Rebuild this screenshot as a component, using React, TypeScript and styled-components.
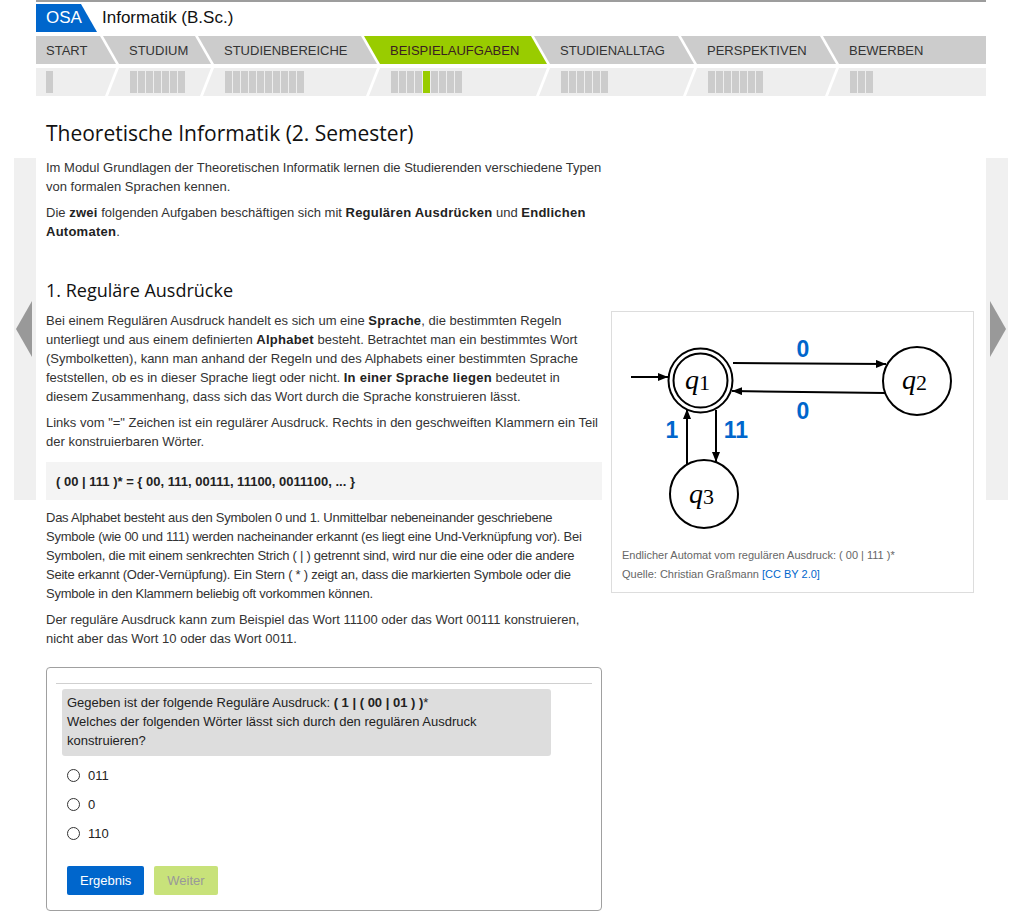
import React from "react";
import styled, { createGlobalStyle } from "styled-components";

const GlobalStyle = createGlobalStyle`
  html, body {
    margin: 0;
    padding: 0;
    background: #fff;
  }
  body {
    font-family: "Liberation Sans", Arial, sans-serif;
    font-size: 13px;
    color: #333;
  }
`;

type StepData = {
  label: string;
  width: number;
  blocks: number;
  active?: boolean;
  current?: number;
};

const steps: StepData[] = [
  { label: "START", width: 80, blocks: 1 },
  { label: "STUDIUM", width: 108, blocks: 7 },
  { label: "STUDIENBEREICHE", width: 179, blocks: 10 },
  { label: "BEISPIELAUFGABEN", width: 183, blocks: 9, active: true, current: 4 },
  { label: "STUDIENALLTAG", width: 160, blocks: 6 },
  { label: "PERSPEKTIVEN", width: 155, blocks: 7 },
  { label: "BEWERBEN", width: 163, blocks: 3 },
];

type Pos = "first" | "mid" | "last";

const tabClip: Record<Pos, string> = {
  first: "polygon(0 0, calc(100% - 16px) 0, 100% 100%, 0 100%)",
  mid: "polygon(0 0, calc(100% - 16px) 0, 100% 100%, 16px 100%)",
  last: "polygon(0 0, 100% 0, 100% 100%, 16px 100%)",
};

const progressClip: Record<Pos, string> = {
  first: "polygon(0 0, 100% 0, calc(100% - 11px) 100%, 0 100%)",
  mid: "polygon(16px 0, 100% 0, calc(100% - 11px) 100%, 5px 100%)",
  last: "polygon(16px 0, 100% 0, 100% 100%, 5px 100%)",
};

export default function App() {
  return (
    <>
      <GlobalStyle />
      <Page>
        <Header>
          <TopRule />
          <Brand>
            <Logo>OSA</Logo>
            <BrandTitle>Informatik (B.Sc.)</BrandTitle>
          </Brand>
          <Nav>
            {steps.map((s, i) => {
              const pos: Pos = i === 0 ? "first" : i === steps.length - 1 ? "last" : "mid";
              return (
                <Step key={s.label} $w={s.width} $pos={pos}>
                  <Tab $pos={pos} $active={s.active}>
                    {s.label}
                  </Tab>
                  <Progress $pos={pos}>
                    {Array.from({ length: s.blocks }).map((_, b) => (
                      <Block key={b} $on={s.current === b} />
                    ))}
                  </Progress>
                </Step>
              );
            })}
          </Nav>
        </Header>

        <SideButton $side="left" aria-label="zurück">
          <Arrow $dir="left" />
        </SideButton>

        <Content>
          <PageTitle>Theoretische Informatik (2. Semester)</PageTitle>
          <Intro>
            <P>
              Im Modul Grundlagen der Theoretischen Informatik lernen die Studierenden verschiedene
              Typen von formalen Sprachen kennen.
            </P>
            <P>
              Die <b>zwei</b> folgenden Aufgaben beschäftigen sich mit <b>Regulären Ausdrücken</b> und{" "}
              <b>Endlichen Automaten</b>.
            </P>
          </Intro>

          <SectionTitle>1. Reguläre Ausdrücke</SectionTitle>

          <Row>
            <TextColumn>
              <P>
                Bei einem Regulären Ausdruck handelt es sich um eine <b>Sprache</b>, die bestimmten
                Regeln unterliegt und aus einem definierten <b>Alphabet</b> besteht. Betrachtet man
                ein bestimmtes Wort (Symbolketten), kann man anhand der Regeln und des Alphabets einer
                bestimmten Sprache feststellen, ob es in dieser Sprache liegt oder nicht.{" "}
                <b>In einer Sprache liegen</b> bedeutet in diesem Zusammenhang, dass sich das Wort
                durch die Sprache konstruieren lässt.
              </P>
              <P>
                Links vom "=" Zeichen ist ein regulärer Ausdruck. Rechts in den geschweiften Klammern
                ein Teil der konstruierbaren Wörter.
              </P>
              <CodeBlock>( 00 | 111 )* = {"{"} 00, 111, 00111, 11100, 0011100, ... {"}"}</CodeBlock>
              <P $tight>
                Das Alphabet besteht aus den Symbolen 0 und 1. Unmittelbar nebeneinander geschriebene
                Symbole (wie 00 und 111) werden nacheinander erkannt (es liegt eine Und-Verknüpfung
                vor). Bei Symbolen, die mit einem senkrechten Strich ( | ) getrennt sind, wird nur die
                eine oder die andere Seite erkannt (Oder-Vernüpfung). Ein Stern ( * ) zeigt an, dass
                die markierten Symbole oder die Symbole in den Klammern beliebig oft vorkommen können.
              </P>
              <P>
                Der reguläre Ausdruck kann zum Beispiel das Wort 11100 oder das Wort 00111
                konstruieren, nicht aber das Wort 10 oder das Wort 0011.
              </P>

              <Quiz>
                <QuizRule />
                <Question>
                  Gegeben ist der folgende Reguläre Ausdruck: <b>( 1 | ( 00 | 01 ) )</b>*
                  <br />
                  Welches der folgenden Wörter lässt sich durch den regulären Ausdruck konstruieren?
                </Question>
                <Options>
                  {["011", "0", "110"].map((o) => (
                    <Option key={o}>
                      <Radio type="radio" name="answer" />
                      {o}
                    </Option>
                  ))}
                </Options>
                <Buttons>
                  <Button $variant="primary">Ergebnis</Button>
                  <Button $variant="disabled">Weiter</Button>
                </Buttons>
              </Quiz>
            </TextColumn>

            <Figure>
              <Automaton />
              <Caption>
                Endlicher Automat vom regulären Ausdruck: ( 00 | 111 )*
                <br />
                Quelle: Christian Graßmann <CaptionLink>[CC BY 2.0]</CaptionLink>
              </Caption>
            </Figure>
          </Row>
        </Content>

        <SideButton $side="right" aria-label="weiter">
          <Arrow $dir="right" />
        </SideButton>
      </Page>
    </>
  );
}

const Automaton: React.FC = () => (
  <DiagramSvg width="361" height="229" viewBox="0 0 361 229">
    <defs>
      <marker id="head" viewBox="0 0 10 8" refX="10" refY="4" markerWidth="10" markerHeight="8" markerUnits="userSpaceOnUse" orient="auto">
        <path d="M0 0 L10 4 L0 8 Z" fill="#000" />
      </marker>
    </defs>
    <g fill="none" stroke="#000" strokeWidth="2">
      <circle cx="88.5" cy="68.5" r="32" />
      <circle cx="88.5" cy="68.5" r="27" />
      <circle cx="305" cy="69" r="34" />
      <circle cx="92" cy="182" r="34" />
      <line x1="19" y1="65" x2="56" y2="65" markerEnd="url(#head)" />
      <line x1="121" y1="51" x2="274" y2="52" markerEnd="url(#head)" />
      <line x1="273" y1="81" x2="120" y2="79" markerEnd="url(#head)" />
      <line x1="104" y1="98" x2="104" y2="150" markerEnd="url(#head)" />
      <line x1="75" y1="152" x2="75" y2="97" markerEnd="url(#head)" />
    </g>
    <g fontFamily='"Liberation Serif", "DejaVu Serif", serif' fill="#000">
      <StateLabel x="73" y="77">
        <tspan fontStyle="italic">q</tspan>
        <tspan fontSize="22" dy="1">1</tspan>
      </StateLabel>
      <StateLabel x="290" y="77">
        <tspan fontStyle="italic">q</tspan>
        <tspan fontSize="22" dy="1">2</tspan>
      </StateLabel>
      <StateLabel x="77" y="191">
        <tspan fontStyle="italic">q</tspan>
        <tspan fontSize="22" dy="1">3</tspan>
      </StateLabel>
    </g>
    <g fontFamily='"Liberation Sans", Arial, sans-serif' fontWeight="bold" fontSize="23" fill="#0066cc" textAnchor="middle">
      <text x="191" y="45">0</text>
      <text x="191" y="107">0</text>
      <text x="60" y="126">1</text>
      <text x="124" y="126">11</text>
    </g>
  </DiagramSvg>
);

const Page = styled.div`
  display: grid;
  grid-template-columns: 14px 22px 950px 22px;
  grid-template-rows: auto auto;
  width: 1012px;
`;

const Header = styled.header`
  grid-column: 3;
  grid-row: 1;
  display: flex;
  flex-direction: column;
`;

const TopRule = styled.div`
  height: 2px;
  background: #9d9d9d;
`;

const Brand = styled.div`
  display: flex;
  align-items: center;
  height: 28px;
  margin: 2px 0 4px;
`;

const Logo = styled.div`
  width: 61px;
  height: 28px;
  box-sizing: border-box;
  padding-left: 10px;
  line-height: 28px;
  font-size: 17px;
  color: #fff;
  background: #0066cc;
  clip-path: polygon(0 0, 45px 0, 61px 100%, 0 100%);
`;

const BrandTitle = styled.div`
  margin-left: 5px;
  font-size: 17px;
  color: #111;
`;

const Nav = styled.nav`
  display: flex;
`;

const Step = styled.div<{ $w: number; $pos: Pos }>`
  display: flex;
  flex-direction: column;
  gap: 4px;
  flex: 0 0 ${({ $w }) => $w}px;
  margin-left: ${({ $pos }) => ($pos === "first" ? 0 : -13)}px;
`;

const Tab = styled.div<{ $pos: Pos; $active?: boolean }>`
  height: 28px;
  line-height: 29px;
  box-sizing: border-box;
  padding-left: ${({ $pos }) => ($pos === "first" ? 10 : 26)}px;
  font-size: 13px;
  color: ${({ $active }) => ($active ? "#3a2020" : "#333")};
  white-space: nowrap;
  background: ${({ $active }) => ($active ? "#99cc00" : "#cccccc")};
  clip-path: ${({ $pos }) => tabClip[$pos]};
`;

const Progress = styled.div<{ $pos: Pos }>`
  display: flex;
  gap: 1px;
  height: 28px;
  box-sizing: border-box;
  padding: 3px 0 3px ${({ $pos }) => ($pos === "first" ? 10 : 27)}px;
  background: #eeeeee;
  clip-path: ${({ $pos }) => progressClip[$pos]};
`;

const Block = styled.span<{ $on: boolean }>`
  width: 7px;
  height: 22px;
  background: ${({ $on }) => ($on ? "#99cc00" : "#cccccc")};
`;

const SideButton = styled.div<{ $side: "left" | "right" }>`
  grid-column: ${({ $side }) => ($side === "left" ? 2 : 4)};
  grid-row: 2;
  align-self: start;
  margin-top: 62px;
  height: 342px;
  background: #f0f0f0;
  display: flex;
  align-items: center;
  justify-content: center;
  cursor: pointer;
`;

const Arrow = styled.span<{ $dir: "left" | "right" }>`
  width: 0;
  height: 0;
  border-top: 28px solid transparent;
  border-bottom: 28px solid transparent;
  ${({ $dir }) =>
    $dir === "left"
      ? "border-right: 16px solid #999; margin-right: 3px;"
      : "border-left: 16px solid #999; margin-left: 1px;"}
`;

const Content = styled.main`
  grid-column: 3;
  grid-row: 2;
  padding: 0 10px 4px;
`;

const PageTitle = styled.h1`
  margin: 25px 0 12px;
  font-family: "Open Sans", "DejaVu Sans", sans-serif;
  font-weight: 400;
  font-size: 21px;
  line-height: 25px;
  color: #111;
`;

const Intro = styled.div`
  width: 556px;
`;

const P = styled.p<{ $tight?: boolean }>`
  margin: 0 0 7px;
  font-size: 13px;
  line-height: 19px;
  color: #333;
  letter-spacing: ${({ $tight }) => ($tight ? "-0.25px" : "0")};

  b {
    color: #222;
    letter-spacing: 0.25px;
  }
`;

const SectionTitle = styled.h2`
  margin: 38px 0 10px;
  font-family: "Open Sans", "DejaVu Sans", sans-serif;
  font-weight: 400;
  font-size: 18px;
  line-height: 22px;
  color: #111;
`;

const Row = styled.div`
  display: flex;
  align-items: flex-start;
  gap: 9px;
`;

const TextColumn = styled.div`
  flex: 0 0 556px;
`;

const CodeBlock = styled.div`
  margin: 11px 0 8px;
  padding: 10px 10px 9px;
  background: #f4f4f4;
  font-weight: bold;
  line-height: 19px;
  color: #222;
`;

const Quiz = styled.section`
  margin-top: 19px;
  padding: 15px 9px 15px;
  border: 1px solid #a0a0a0;
  border-radius: 4px;
`;

const QuizRule = styled.hr`
  margin: 0 0 5px;
  border: 0;
  border-top: 1px solid #d0d0d0;
`;

const Question = styled.div`
  width: 479px;
  margin-left: 6px;
  padding: 4px 5px 6px;
  background: #dddddd;
  border-radius: 3px;
  line-height: 19px;
  color: #222;
`;

const Options = styled.div`
  display: flex;
  flex-direction: column;
  margin: 5px 0 0 11px;
`;

const Option = styled.label`
  display: flex;
  align-items: center;
  gap: 8px;
  height: 29px;
  color: #222;
`;

const Radio = styled.input`
  appearance: none;
  width: 13px;
  height: 13px;
  margin: 0;
  border: 1px solid #333;
  border-radius: 50%;
  background: #fff;
`;

const Buttons = styled.div`
  display: flex;
  gap: 10px;
  margin: 18px 0 0 11px;
`;

const Button = styled.button<{ $variant: "primary" | "disabled" }>`
  height: 29px;
  padding: 0 13px;
  border: 0;
  border-radius: 2px;
  font-family: "Liberation Sans", Arial, sans-serif;
  font-size: 13px;
  color: ${({ $variant }) => ($variant === "primary" ? "#fff" : "#999")};
  background: ${({ $variant }) => ($variant === "primary" ? "#0066cc" : "#c8e27a")};
`;

const Figure = styled.figure`
  flex: 0 0 361px;
  margin: 0;
  border: 1px solid #dddddd;
`;

const DiagramSvg = styled.svg`
  display: block;
`;

const StateLabel = styled.text`
  font-size: 28px;
`;

const Caption = styled.figcaption`
  padding: 5px 10px 8px;
  font-size: 11px;
  line-height: 19px;
  color: #666;
`;

const CaptionLink = styled.a`
  color: #0066cc;
  text-decoration: none;
`;
